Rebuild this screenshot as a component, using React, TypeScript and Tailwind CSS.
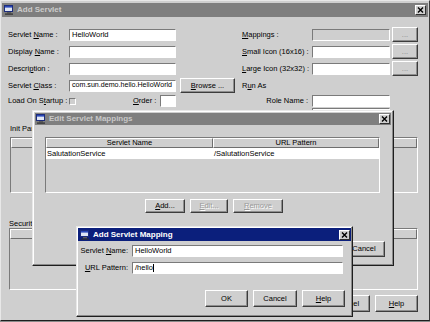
import React from 'react';

const Field: React.FC<{ className?: string; value?: string; disabled?: boolean; caret?: boolean }> = ({ className = '', value, disabled, caret }) => (
  <div
    className={`h-[12px] flex items-center pl-[2px] border border-t-[#7a7a7a] border-l-[#7a7a7a] border-b-white border-r-white whitespace-nowrap overflow-hidden ${
      disabled ? 'bg-[#cfcfcf]' : 'bg-white'
    } ${className}`}
  >
    {value}
    {caret && <span className="w-[1px] h-[8px] bg-black" />}
  </div>
);

const Btn: React.FC<{ className?: string; disabled?: boolean; children: React.ReactNode }> = ({ className = '', disabled, children }) => (
  <div
    className={`flex items-center justify-center bg-[#cfcfcf] border border-t-white border-l-white border-r-[#3c3c3c] border-b-[#3c3c3c] shadow-[inset_-1px_-1px_0_#8e8e8e] whitespace-nowrap ${
      disabled ? 'text-[#9a9a9a] [text-shadow:1px_1px_0_#fff]' : ''
    } ${className}`}
  >
    {children}
  </div>
);

const CloseBox = () => (
  <div className="w-[11px] h-[10px] bg-[#cfcfcf] border border-t-white border-l-white border-r-[#303030] border-b-[#303030] flex items-center justify-center">
    <svg width="7" height="6" viewBox="0 0 7 6">
      <path d="M1 0.5 L6 5.5 M6 0.5 L1 5.5" stroke="#000" strokeWidth="1.4" />
    </svg>
  </div>
);

const WinIcon = () => (
  <svg width="10" height="10" viewBox="0 0 10 10">
    <rect x="0.5" y="0.5" width="8" height="6" fill="#dfe6f4" stroke="#1c2c7c" />
    <rect x="1" y="1" width="7" height="1.6" fill="#2a48b8" />
    <rect x="3" y="7" width="4" height="1.5" fill="#5a5a5a" />
    <rect x="1" y="8.5" width="8" height="1.2" fill="#2e2e2e" />
  </svg>
);

const Row: React.FC<{ label: React.ReactNode; labelClass?: string; className?: string; children?: React.ReactNode }> = ({
  label,
  labelClass = 'w-[61px]',
  className = 'h-[17px]',
  children,
}) => (
  <div className={`flex items-center ${className}`}>
    <span className={`whitespace-nowrap ${labelClass}`}>{label}</span>
    {children}
  </div>
);

const HeaderCell: React.FC<{ className?: string; children?: React.ReactNode }> = ({ className = '', children }) => (
  <div className={`h-[10px] flex items-center justify-center border border-t-white border-l-white border-r-[#6e6e6e] border-b-[#6e6e6e] ${className}`}>
    {children}
  </div>
);

export default function App() {
  return (
    <div className="w-[430px] h-[322px] bg-[#8a8a8a] font-['Liberation_Sans',Arial,sans-serif] text-[7.5px] leading-none text-black">
      <div className="relative w-[430px] h-[321px] overflow-hidden bg-[#cfcfcf] border border-t-[#e8e8e8] border-l-[#e8e8e8] border-r-[#3a3a3a] border-b-[#1e1e1e] flex flex-col">
        {/* main title bar (inactive) */}
        <div className="mx-[1px] mt-[2px] h-[14px] bg-[#7f7f7f] flex items-center px-[2px] gap-[3px]">
          <WinIcon />
          <span className="text-[8px] font-bold text-[#cccccc]">Add Servlet</span>
          <div className="ml-auto">
            <CloseBox />
          </div>
        </div>

        <div className="flex flex-col pl-[7px] pr-[11px] mt-[9px]">
          <div className="flex">
            {/* left column */}
            <div className="w-[234px] flex flex-col">
              <Row label={<>Servlet <u>N</u>ame :</>}>
                <Field className="w-[107px]" value="HelloWorld" />
              </Row>
              <Row label={<>Display <u>N</u>ame :</>}>
                <Field className="w-[107px]" />
              </Row>
              <Row label={<>Descri<u>p</u>tion :</>}>
                <Field className="w-[107px]" />
              </Row>
              <Row label={<>Servlet <u>C</u>lass :</>}>
                <Field className="w-[107px] text-[7.1px] pl-[1px]" value="com.sun.demo.hello.HelloWorld" />
                <Btn className="ml-[4px] w-[55px] h-[15px]">
                  <span>
                    <u>B</u>rowse ...
                  </span>
                </Btn>
              </Row>
              <Row label={<>Load On S<u>t</u>artup :</>} className="h-[14px]">
                <div className="w-[7px] h-[7px] bg-[#cfcfcf] border border-t-[#7a7a7a] border-l-[#7a7a7a] border-b-white border-r-white" />
                <span className="ml-[57px] w-[27px]">
                  <u>O</u>rder :
                </span>
                <Field className="w-[16px]" />
              </Row>
            </div>

            {/* right column */}
            <div className="flex-1 flex flex-col">
              <Row label={<><u>M</u>appings :</>} labelClass="w-[70px]">
                <Field className="w-[78px]" disabled />
                <Btn className="ml-[2px] w-[26px] h-[15px] text-[#8a8a8a]">...</Btn>
              </Row>
              <Row label={<><u>S</u>mall Icon (16x16) :</>} labelClass="w-[70px]">
                <Field className="w-[78px]" />
                <Btn className="ml-[2px] w-[26px] h-[15px] text-[#8a8a8a]">...</Btn>
              </Row>
              <Row label={<><u>L</u>arge Icon (32x32) :</>} labelClass="w-[70px]">
                <Field className="w-[78px]" />
                <Btn className="ml-[2px] w-[26px] h-[15px] text-[#8a8a8a]">...</Btn>
              </Row>
              <Row label={<>R<u>u</u>n As</>} labelClass="w-[70px]" />
              <Row label="Role Name :" labelClass="w-[70px] text-right pr-[4px]" className="h-[14px]">
                <Field className="w-[78px]" />
              </Row>
              <Field className="ml-[70px] w-[78px]" />
            </div>
          </div>

          {/* init parameters */}
          <div className="h-[17px] flex items-center pl-[2px]">Init Par</div>
          <div className="ml-[2px] h-[56px] border border-t-[#7a7a7a] border-l-[#7a7a7a] border-b-white border-r-white flex flex-col">
            <div className="flex">
              <HeaderCell className="w-[200px]" />
              <HeaderCell className="flex-1" />
            </div>
          </div>

          {/* security */}
          <div className="h-[35px] flex items-end pb-[1px] pl-[1px]">Securit</div>
          <div className="ml-[1px] h-[62px] border border-t-[#7a7a7a] border-l-[#7a7a7a] border-b-white border-r-white flex flex-col">
            <div className="flex">
              <HeaderCell className="w-[200px]" />
              <HeaderCell className="flex-1" />
            </div>
          </div>

          <div className="mt-[5px] h-[17px] flex justify-end gap-[5px]">
            <Btn className="w-[45px]">OK</Btn>
            <Btn className="w-[45px]">Cancel</Btn>
            <Btn className="w-[43px]">
              <span>
                <u>H</u>elp
              </span>
            </Btn>
          </div>
        </div>

        {/* Edit Servlet Mappings (inactive) */}
        <div className="absolute left-[31px] top-[109px] w-[362px] h-[156px] bg-[#cfcfcf] border border-t-[#e8e8e8] border-l-[#e8e8e8] border-r-[#1e1e1e] border-b-[#1e1e1e] shadow-[inset_-1px_-1px_0_#8a8a8a,inset_1px_1px_0_#fff] flex flex-col">
          <div className="mx-[2px] mt-[2px] h-[12px] bg-[#7f7f7f] flex items-center pl-[1px] pr-[1px] gap-[3px]">
            <WinIcon />
            <span className="text-[8px] font-bold text-[#c8c8c8]">Edit Servlet Mappings</span>
            <div className="ml-auto">
              <CloseBox />
            </div>
          </div>
          <div className="ml-[12px] mt-[12px] w-[335px] h-[56px] border border-t-[#7a7a7a] border-l-[#7a7a7a] border-b-white border-r-white flex flex-col">
            <div className="flex">
              <HeaderCell className="w-[167px]">Servlet Name</HeaderCell>
              <HeaderCell className="flex-1">URL Pattern</HeaderCell>
            </div>
            <div className="h-[11px] bg-white flex items-center">
              <span className="w-[167px] pl-[1px]">SalutationService</span>
              <span className="pl-[1px]">/SalutationService</span>
            </div>
          </div>
          <div className="mt-[6px] h-[14px] flex ml-[112px] gap-[5px]">
            <Btn className="w-[40px]">
              <span>
                <u>A</u>dd...
              </span>
            </Btn>
            <Btn className="w-[38px]" disabled>
              <span>
                <u>E</u>dit...
              </span>
            </Btn>
            <Btn className="w-[50px]" disabled>
              <span>
                <u>R</u>emove
              </span>
            </Btn>
          </div>
          <div className="mt-[28px] h-[16px] flex justify-end pr-[8px] gap-[5px]">
            <Btn className="w-[42px]">OK</Btn>
            <Btn className="w-[42px]">Cancel</Btn>
          </div>
        </div>

        {/* Add Servlet Mapping (active) */}
        <div className="absolute left-[75px] top-[225px] w-[277px] h-[91px] bg-[#cfcfcf] border border-t-[#e8e8e8] border-l-[#e8e8e8] border-r-[#1e1e1e] border-b-[#1e1e1e] shadow-[inset_-1px_-1px_0_#8a8a8a,inset_1px_1px_0_#fff] flex flex-col">
          <div className="mx-[1px] mt-[1px] h-[13px] bg-[#0b1f7c] flex items-center pl-[2px] pr-[1px] gap-[3px]">
            <WinIcon />
            <span className="text-[8px] font-bold text-white">Add Servlet Mapping</span>
            <div className="ml-auto">
              <CloseBox />
            </div>
          </div>
          <div className="mt-[4px] h-[12px] flex items-center">
            <span className="w-[55px] text-right pr-[4px] whitespace-nowrap">
              Servlet <u>N</u>ame:
            </span>
            <Field className="w-[211px]" value="HelloWorld" />
          </div>
          <div className="mt-[5px] h-[12px] flex items-center">
            <span className="w-[55px] text-right pr-[4px] whitespace-nowrap">
              <u>U</u>RL Pattern:
            </span>
            <Field className="w-[211px]" value="/hello" caret />
          </div>
          <div className="mt-[16px] h-[17px] flex justify-end pr-[7px] gap-[5px]">
            <Btn className="w-[43px]">OK</Btn>
            <Btn className="w-[44px]">Cancel</Btn>
            <Btn className="w-[43px]">
              <span>
                <u>H</u>elp
              </span>
            </Btn>
          </div>
        </div>
      </div>
    </div>
  );
}
